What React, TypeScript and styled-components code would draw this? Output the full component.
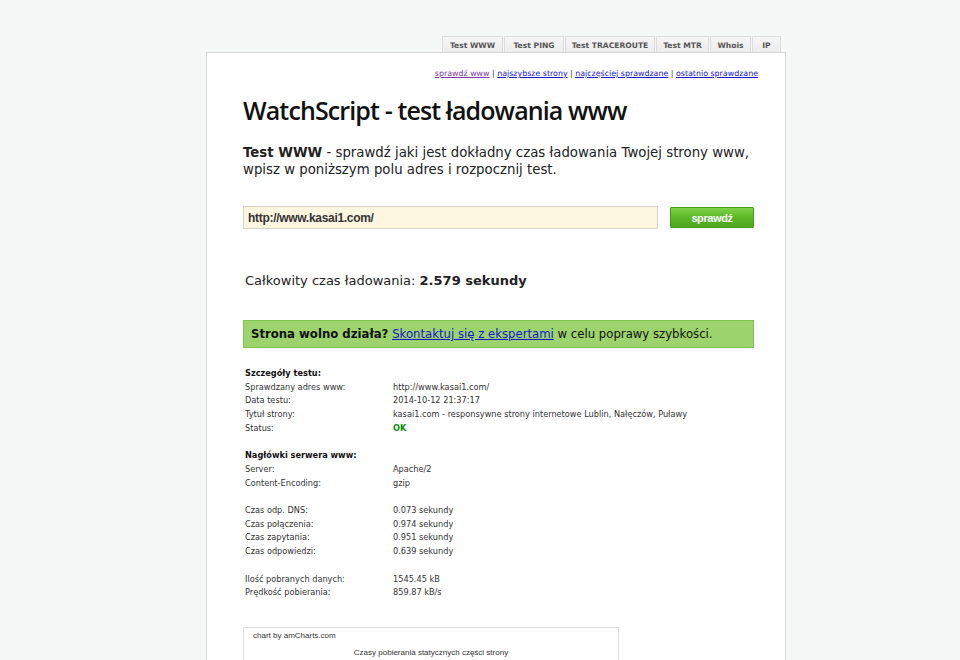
import React from "react";
import styled, { createGlobalStyle } from "styled-components";

const Global = createGlobalStyle`
  html, body { margin: 0; padding: 0; background: #f6f7f7; }
  body { font-family: "DejaVu Sans", Verdana, sans-serif; color: #222; }
`;

const Page = styled.div`
  width: 580px;
  margin-left: 206px;
  padding-top: 36px;
`;

const Tabs = styled.div`
  display: flex;
  justify-content: flex-end;
  gap: 1px;
  padding-right: 5px;
`;

const Tab = styled.div<{ w: number }>`
  width: ${(p) => p.w}px;
  height: 16px;
  box-sizing: border-box;
  border: 1px solid #dcdcdc;
  border-bottom: none;
  background: linear-gradient(#f6f6f6, #ececec);
  font-size: 7.6px;
  font-weight: bold;
  color: #555;
  display: flex;
  align-items: center;
  justify-content: center;
  padding-top: 1px;
`;

const Box = styled.div`
  background: #fff;
  border: 1px solid #d8d8d8;
  border-bottom: none;
  min-height: 620px;
  padding: 15px 27px 0 36px;
  box-sizing: border-box;
`;

const TopLinks = styled.div`
  text-align: right;
  font-size: 7.9px;
  color: #333;
  line-height: 11px;
`;

const Link = styled.a<{ visited?: boolean }>`
  color: ${(p) => (p.visited ? "#7a3aa6" : "#1a1acc")};
  text-decoration: underline;
`;

const Title = styled.h1`
  margin: 15px 0 0 0;
  font-family: "Open Sans", sans-serif;
  font-weight: 600;
  font-size: 25px;
  letter-spacing: -0.88px;
  line-height: 32px;
  color: #111;
`;

const Lead = styled.p`
  margin: 18px 0 0 0;
  font-size: 13.3px;
  line-height: 17px;
  color: #222;
`;

const Form = styled.div`
  display: flex;
  align-items: center;
  justify-content: space-between;
  margin-top: 28px;
  width: 511px;
`;

const Input = styled.div`
  width: 415px;
  height: 23px;
  box-sizing: border-box;
  background: #fdf6e1;
  border: 1px solid #d3d0c4;
  font-family: "Liberation Sans", Arial, sans-serif;
  font-weight: bold;
  font-size: 12px;
  color: #333;
  display: flex;
  align-items: center;
  padding-left: 4px;
  letter-spacing: -0.3px;
`;

const Button = styled.div`
  width: 84px;
  height: 21px;
  box-sizing: border-box;
  background: linear-gradient(#7fd24b, #5cb828 50%, #4ea51c);
  border: 1px solid #4c9a1f;
  border-radius: 1px;
  color: #fff;
  font-family: "Liberation Sans", Arial, sans-serif;
  font-size: 11px;
  font-weight: bold;
  letter-spacing: -0.4px;
  display: flex;
  align-items: center;
  justify-content: center;
`;

const Total = styled.div`
  margin: 44px 0 0 2px;
  font-size: 13px;
  color: #222;
`;

const Alert = styled.div`
  margin-top: 32px;
  width: 511px;
  height: 28px;
  box-sizing: border-box;
  background: #9cd36c;
  border: 1px solid #80c24f;
  font-size: 11.7px;
  display: flex;
  align-items: center;
  padding-left: 7px;
  color: #111;
  a { color: #1515d0; text-decoration: underline; }
`;

const Details = styled.div`
  margin: 19px 0 0 2px;
  display: grid;
  grid-template-columns: 148px 1fr;
  font-size: 8.2px;
  line-height: 13.7px;
  color: #333;
`;

const Heading = styled.div`
  grid-column: 1 / 3;
  font-weight: bold;
  color: #111;
`;

const Gap = styled.div`
  grid-column: 1 / 3;
  height: 13.7px;
`;

const Ok = styled.span`
  color: #0a8a0a;
  font-weight: bold;
`;

const Chart = styled.div`
  margin-top: 27px;
  width: 376px;
  height: 60px;
  box-sizing: border-box;
  border: 1px solid #dedede;
  border-bottom: none;
  font-family: "Liberation Sans", Arial, sans-serif;
  font-size: 8px;
  color: #333;
  padding: 3px 0 0 9px;
`;

const ChartTitle = styled.div`
  text-align: center;
  margin-top: 8px;
  padding-right: 9px;
`;

const rows1: [string, React.ReactNode][] = [
  ["Sprawdzany adres www:", "http://www.kasai1.com/"],
  ["Data testu:", "2014-10-12 21:37:17"],
  ["Tytuł strony:", "kasai1.com - responsywne strony internetowe Lublin, Nałęczów, Puławy"],
  ["Status:", <Ok>OK</Ok>],
];
const rows2: [string, string][] = [
  ["Server:", "Apache/2"],
  ["Content-Encoding:", "gzip"],
];
const rows3: [string, string][] = [
  ["Czas odp. DNS:", "0.073 sekundy"],
  ["Czas połączenia:", "0.974 sekundy"],
  ["Czas zapytania:", "0.951 sekundy"],
  ["Czas odpowiedzi:", "0.639 sekundy"],
];
const rows4: [string, string][] = [
  ["Ilość pobranych danych:", "1545.45 kB"],
  ["Prędkość pobierania:", "859.87 kB/s"],
];

const renderRows = (rows: [string, React.ReactNode][]) =>
  rows.map(([k, v], i) => (
    <React.Fragment key={k + i}>
      <div>{k}</div>
      <div>{v}</div>
    </React.Fragment>
  ));

const tabs: [string, number][] = [
  ["Test WWW", 61],
  ["Test PING", 60],
  ["Test TRACEROUTE", 90],
  ["Test MTR", 53],
  ["Whois", 41],
  ["IP", 29],
];

export default function App() {
  return (
    <>
      <Global />
      <Page>
        <Tabs>
          {tabs.map(([t, w]) => (
            <Tab key={t} w={w}>{t}</Tab>
          ))}
        </Tabs>
        <Box>
          <TopLinks>
            <Link visited href="#">sprawdź www</Link> | <Link href="#">najszybsze strony</Link> |{" "}
            <Link href="#">najczęściej sprawdzane</Link> | <Link href="#">ostatnio sprawdzane</Link>
          </TopLinks>
          <Title>WatchScript - test ładowania www</Title>
          <Lead>
            <b>Test WWW</b> - sprawdź jaki jest dokładny czas ładowania Twojej strony www,
            <br />
            wpisz w poniższym polu adres i rozpocznij test.
          </Lead>
          <Form>
            <Input>http://www.kasai1.com/</Input>
            <Button>sprawdź</Button>
          </Form>
          <Total>
            Całkowity czas ładowania: <b>2.579 sekundy</b>
          </Total>
          <Alert>
            <b>Strona wolno działa?</b>&nbsp;<a href="#">Skontaktuj się z ekspertami</a>&nbsp;w celu poprawy szybkości.
          </Alert>
          <Details>
            <Heading>Szczegóły testu:</Heading>
            {renderRows(rows1)}
            <Gap />
            <Heading>Nagłówki serwera www:</Heading>
            {renderRows(rows2)}
            <Gap />
            {renderRows(rows3)}
            <Gap />
            {renderRows(rows4)}
          </Details>
          <Chart>
            chart by amCharts.com
            <ChartTitle>Czasy pobierania statycznych części strony</ChartTitle>
          </Chart>
        </Box>
      </Page>
    </>
  );
}
